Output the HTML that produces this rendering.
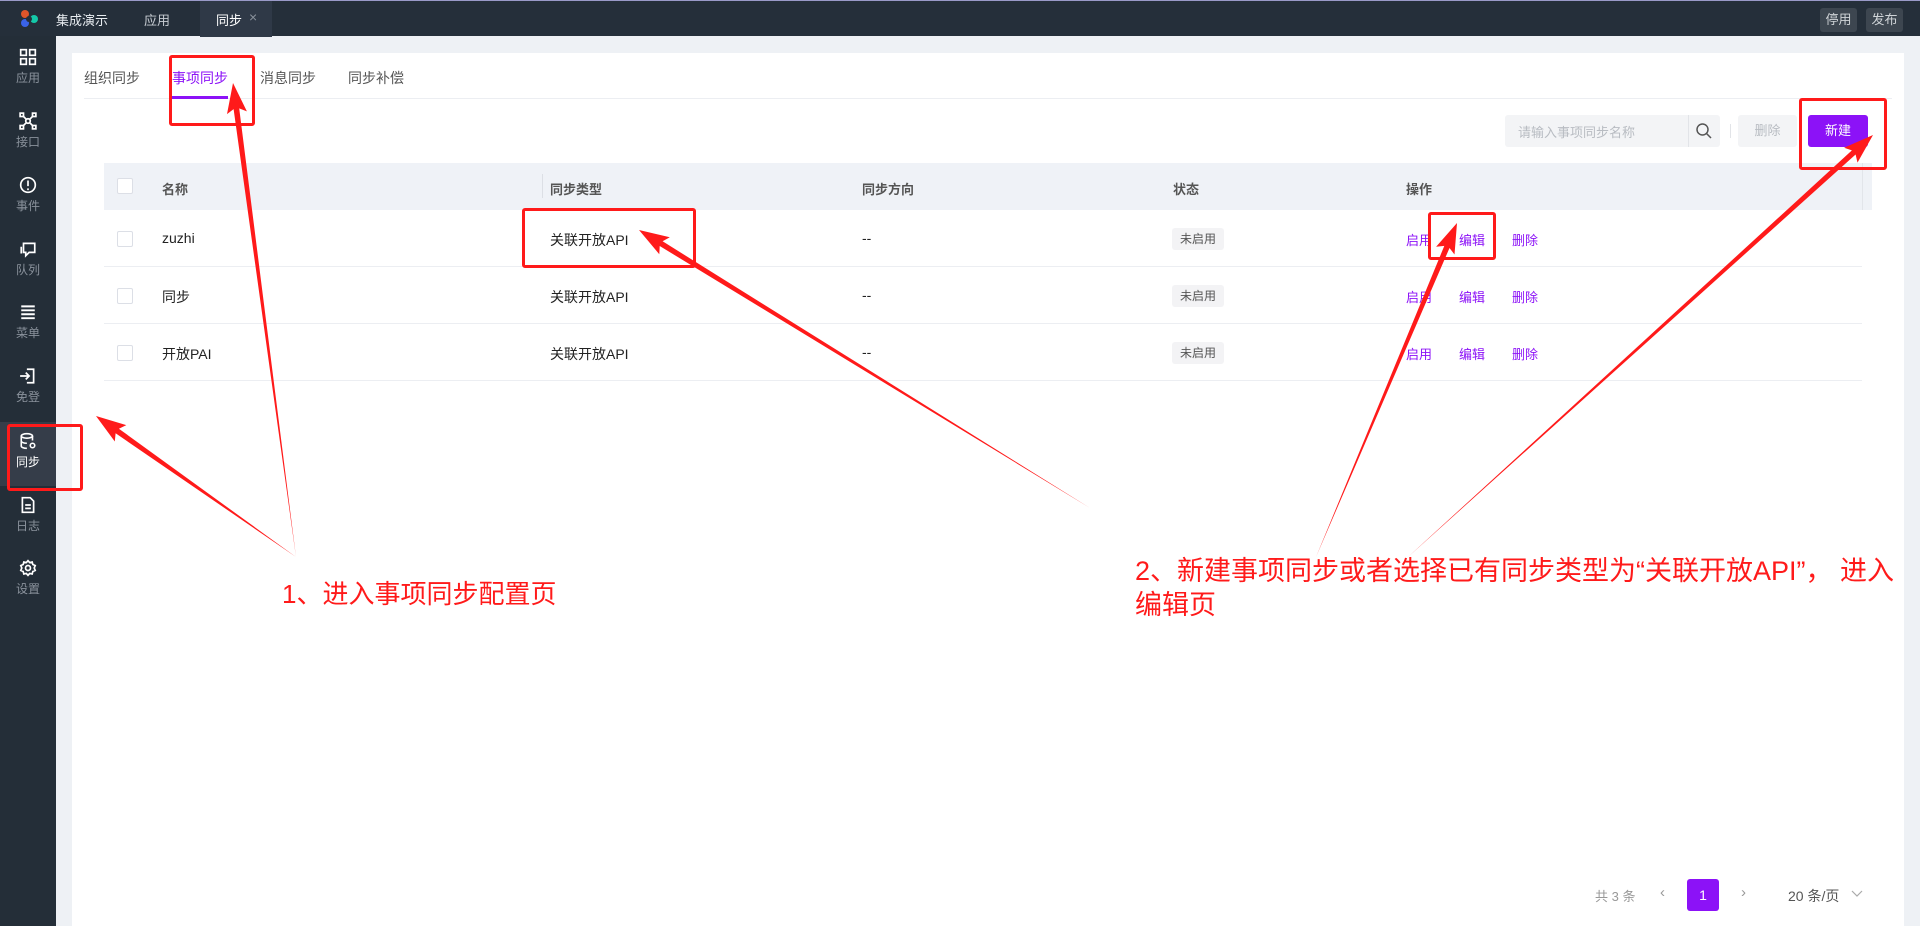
<!DOCTYPE html>
<html><head><meta charset="utf-8">
<style>
*{box-sizing:border-box;margin:0;padding:0}
body{width:1920px;height:926px;overflow:hidden;background:#eef1f5;font-family:"Liberation Sans","Noto Sans CJK SC",sans-serif;font-size:14px;color:#333;position:relative}
.abs{position:absolute}
.top{left:0;top:0;width:1920px;height:36px;background:#252f3a;border-top:1px solid #9a9ac8}
.side{left:0;top:36px;width:56px;height:890px;background:#242e38}
.card{left:72px;top:53px;width:1832px;height:873px;background:#fff}
.si{position:absolute;left:0;width:56px;text-align:center;color:#8a929c;font-size:12px}
.si svg{display:block;margin:0 auto 3px}
.tab{position:absolute;top:68px;font-size:14px;color:#555}
.th{position:absolute;top:179px;font-size:13px;color:#555;font-weight:bold}
.td{position:absolute;font-size:14px;color:#222}
.cb{position:absolute;width:16px;height:16px;border:1px solid #dcdfe6;border-radius:2px;background:#fff}
.tag{position:absolute;width:52px;height:22px;background:#f3f3f5;border-radius:3px;font-size:12px;color:#555;text-align:center;line-height:22px}
.lk{position:absolute;font-size:13px;color:#8c12f7}
.line{position:absolute;left:104px;width:1758px;height:1px;background:#eceef2}
.rb{position:absolute;border:3px solid #ff1a1a;border-radius:3px}
.note{position:absolute;color:#ff1a1a;font-size:27px;line-height:34px}
</style></head><body>
<div class="abs top">
  <svg class="abs" style="left:18px;top:7px" width="22" height="22" viewBox="0 0 22 22"><circle cx="7" cy="6" r="4" fill="#e0552a"/><circle cx="16" cy="11" r="4" fill="#14c8a8"/><circle cx="7" cy="15" r="4" fill="#3a63e8"/><circle cx="11" cy="11" r="3" fill="#252f3a"/></svg>
  <div class="abs" style="left:56px;top:9px;color:#e8ecf0;font-size:13px">集成演示</div>
  <div class="abs" style="left:144px;top:9px;color:#c8cdd3;font-size:13px">应用</div>
  <div class="abs" style="left:200px;top:0;width:72px;height:36px;background:#2f3947"></div>
  <div class="abs" style="left:216px;top:9px;color:#fff;font-size:13px">同步</div>
  <div class="abs" style="left:249px;top:8px;color:#8a929c;font-size:14px">×</div>
  <div class="abs" style="left:1820px;top:7px;width:37px;height:24px;background:#3d4650;border-radius:3px;color:#d0d4d8;font-size:13px;text-align:center;line-height:24px">停用</div>
  <div class="abs" style="left:1866px;top:7px;width:37px;height:24px;background:#3d4650;border-radius:3px;color:#d0d4d8;font-size:13px;text-align:center;line-height:24px">发布</div>
</div>
<div class="abs side">
  <div class="abs" style="left:0;top:386px;width:56px;height:64px;background:#353d49"></div>
</div>
<div class="si" style="top:48px"><svg width="18" height="18" viewBox="0 0 16 16" fill="none" stroke="#fff" stroke-width="1.5"><rect x="1.5" y="1.5" width="5" height="5"/><rect x="9.5" y="1.5" width="5" height="5"/><rect x="1.5" y="9.5" width="5" height="5"/><rect x="9.5" y="9.5" width="5" height="5"/></svg>应用</div>
<div class="si" style="top:112px"><svg width="18" height="18" viewBox="0 0 16 16" fill="none" stroke="#fff" stroke-width="1.5"><rect x="1" y="1" width="3" height="3"/><rect x="12" y="1" width="3" height="3"/><rect x="1" y="12" width="3" height="3"/><rect x="12" y="12" width="3" height="3"/><circle cx="8" cy="8" r="2"/><path d="M4 4l2.5 2.5M12 4l-2.5 2.5M4 12l2.5-2.5M12 12l-2.5-2.5"/></svg>接口</div>
<div class="si" style="top:176px"><svg width="18" height="18" viewBox="0 0 16 16" fill="none" stroke="#fff" stroke-width="1.5"><circle cx="8" cy="8" r="6.5"/><path d="M8 4v5M8 11v1.5"/></svg>事件</div>
<div class="si" style="top:240px"><svg width="18" height="18" viewBox="0 0 16 16" fill="none" stroke="#fff" stroke-width="1.5"><path d="M4 3h10v8H9l-3 3v-3H4zM2 6v6"/></svg>队列</div>
<div class="si" style="top:303px"><svg width="18" height="18" viewBox="0 0 16 16" fill="none" stroke="#fff" stroke-width="1.7"><path d="M2 3h12M2 6.5h12M2 10h12M2 13.5h12"/></svg>菜单</div>
<div class="si" style="top:367px"><svg width="18" height="18" viewBox="0 0 16 16" fill="none" stroke="#fff" stroke-width="1.5"><path d="M7 2h6v12H7M1 8h8M6 5l3 3-3 3"/></svg>免登</div>
<div class="si" style="top:432px;color:#fff"><svg width="18" height="18" viewBox="0 0 16 16" fill="none" stroke="#fff" stroke-width="1.4"><ellipse cx="7" cy="3.5" rx="5" ry="2"/><path d="M2 3.5v9c0 1 2 2 5 2M12 3.5v4M2 8c0 1 2 2 5 2"/><circle cx="12" cy="12" r="2"/></svg>同步</div>
<div class="si" style="top:496px"><svg width="18" height="18" viewBox="0 0 16 16" fill="none" stroke="#fff" stroke-width="1.5"><path d="M3 1.5h7l3 3v10H3zM5.5 8h5M5.5 11h5"/></svg>日志</div>
<div class="si" style="top:559px"><svg width="18" height="18" viewBox="0 0 16 16" fill="none" stroke="#fff" stroke-width="1.5"><circle cx="8" cy="8" r="2.2"/><path d="M8 1.5l1.5 1.7 2.2-.5.6 2.2 2.1.9-.9 2.2.9 2.2-2.1.9-.6 2.2-2.2-.5L8 14.5l-1.5-1.7-2.2.5-.6-2.2-2.1-.9.9-2.2-.9-2.2 2.1-.9.6-2.2 2.2.5z"/></svg>设置</div>

<div class="abs card"></div>
<div class="tab" style="left:84px">组织同步</div>
<div class="tab" style="left:172px;color:#8c12f7">事项同步</div>
<div class="tab" style="left:260px">消息同步</div>
<div class="tab" style="left:348px">同步补偿</div>
<div class="abs" style="left:84px;top:98px;width:1808px;height:1px;background:#eceef2"></div>
<div class="abs" style="left:172px;top:96px;width:56px;height:3px;background:#8c12f7"></div>

<div class="abs" style="left:1505px;top:115px;width:215px;height:32px;background:#f3f4f6;border-radius:3px"></div>
<div class="abs" style="left:1518px;top:122px;font-size:13px;color:#b8bcc2">请输入事项同步名称</div>
<div class="abs" style="left:1688px;top:115px;width:1px;height:32px;background:#e2e4e8"></div>
<svg class="abs" style="left:1695px;top:122px" width="18" height="18" viewBox="0 0 18 18" fill="none" stroke="#555" stroke-width="1.5"><circle cx="7.5" cy="7.5" r="5.5"/><path d="M11.5 11.5l4.5 4.5"/></svg>
<div class="abs" style="left:1730px;top:124px;width:1px;height:14px;background:#e2e4e8"></div>
<div class="abs" style="left:1738px;top:115px;width:59px;height:32px;background:#f3f4f6;border-radius:3px;color:#b8bcc2;font-size:13px;text-align:center;line-height:32px">删除</div>
<div class="abs" style="left:1808px;top:115px;width:60px;height:32px;background:#8c12f7;border-radius:3px;color:#fff;font-size:13px;text-align:center;line-height:32px">新建</div>

<div class="abs" style="left:104px;top:163px;width:1768px;height:47px;background:#eff2f7"></div>
<div class="abs" style="left:1862px;top:163px;width:1px;height:47px;background:#e2e5ea"></div>
<div class="abs" style="left:542px;top:174px;width:1px;height:24px;background:#dcdfe5"></div>
<div class="cb" style="left:117px;top:178px"></div>
<div class="th" style="left:162px">名称</div>
<div class="th" style="left:550px">同步类型</div>
<div class="th" style="left:862px">同步方向</div>
<div class="th" style="left:1173px">状态</div>
<div class="th" style="left:1406px">操作</div>

<div class="cb" style="left:117px;top:231px"></div>
<div class="td" style="left:162px;top:230px">zuzhi</div>
<div class="td" style="left:550px;top:230px">关联开放API</div>
<div class="td" style="left:862px;top:230px">--</div>
<div class="tag" style="left:1172px;top:228px">未启用</div>
<div class="lk" style="left:1406px;top:230px">启用</div><div class="lk" style="left:1459px;top:230px">编辑</div><div class="lk" style="left:1512px;top:230px">删除</div>
<div class="line" style="top:266px"></div>

<div class="cb" style="left:117px;top:288px"></div>
<div class="td" style="left:162px;top:287px">同步</div>
<div class="td" style="left:550px;top:287px">关联开放API</div>
<div class="td" style="left:862px;top:287px">--</div>
<div class="tag" style="left:1172px;top:285px">未启用</div>
<div class="lk" style="left:1406px;top:287px">启用</div><div class="lk" style="left:1459px;top:287px">编辑</div><div class="lk" style="left:1512px;top:287px">删除</div>
<div class="line" style="top:323px"></div>

<div class="cb" style="left:117px;top:345px"></div>
<div class="td" style="left:162px;top:344px">开放PAI</div>
<div class="td" style="left:550px;top:344px">关联开放API</div>
<div class="td" style="left:862px;top:344px">--</div>
<div class="tag" style="left:1172px;top:342px">未启用</div>
<div class="lk" style="left:1406px;top:344px">启用</div><div class="lk" style="left:1459px;top:344px">编辑</div><div class="lk" style="left:1512px;top:344px">删除</div>
<div class="line" style="top:380px"></div>

<div class="abs" style="left:1595px;top:886px;font-size:13px;color:#999">共 3 条</div>
<div class="abs" style="left:1660px;top:884px;font-size:15px;color:#999">‹</div>
<div class="abs" style="left:1687px;top:879px;width:32px;height:32px;background:#8c12f7;border-radius:3px;color:#fff;font-size:14px;text-align:center;line-height:32px">1</div>
<div class="abs" style="left:1741px;top:884px;font-size:15px;color:#999">›</div>
<div class="abs" style="left:1788px;top:886px;font-size:14px;color:#555">20 条/页</div>
<svg class="abs" style="left:1851px;top:890px" width="12" height="8" viewBox="0 0 12 8" fill="none" stroke="#aaa" stroke-width="1.2"><path d="M1 1l5 5 5-5"/></svg>

<div class="rb" style="left:169px;top:55px;width:86px;height:71px"></div>
<div class="rb" style="left:1799px;top:98px;width:88px;height:72px"></div>
<div class="rb" style="left:522px;top:208px;width:174px;height:60px"></div>
<div class="rb" style="left:1428px;top:212px;width:68px;height:48px"></div>
<div class="rb" style="left:7px;top:424px;width:76px;height:67px"></div>

<svg class="abs" style="left:0;top:0" width="1920" height="926" id="arr"></svg>
<div class="note" style="left:282px;top:577px;font-size:26px">1、进入事项同步配置页</div>
<div class="note" style="left:1135px;top:554px">2、新建事项同步或者选择已有同步类型为“关联开放API”， 进入<br>编辑页</div>
<script>
var A=[[296,557,233,83],[296,557,96,416],[1090,508,639,230],[1316,557,1457,223],[1408,557,1873,135]];
var s='';
A.forEach(function(a){var x0=a[0],y0=a[1],x1=a[2],y1=a[3];var dx=x1-x0,dy=y1-y0,L=Math.hypot(dx,dy),ux=dx/L,uy=dy/L,nx=-uy,ny=ux;
var hl=26,hw=10,sw=2.8;var bx=x1-ux*hl,by=y1-uy*hl;
var p=[[x0,y0],[bx+nx*sw,by+ny*sw],[bx+nx*hw-ux*4,by+ny*hw-uy*4],[x1,y1],[bx-nx*hw-ux*4,by-ny*hw-uy*4],[bx-nx*sw,by-ny*sw]];
s+='<polygon fill="#ff1a1a" points="'+p.map(function(q){return q[0].toFixed(1)+','+q[1].toFixed(1)}).join(' ')+'"/>';});
document.getElementById('arr').innerHTML=s;
</script>
</body></html>
